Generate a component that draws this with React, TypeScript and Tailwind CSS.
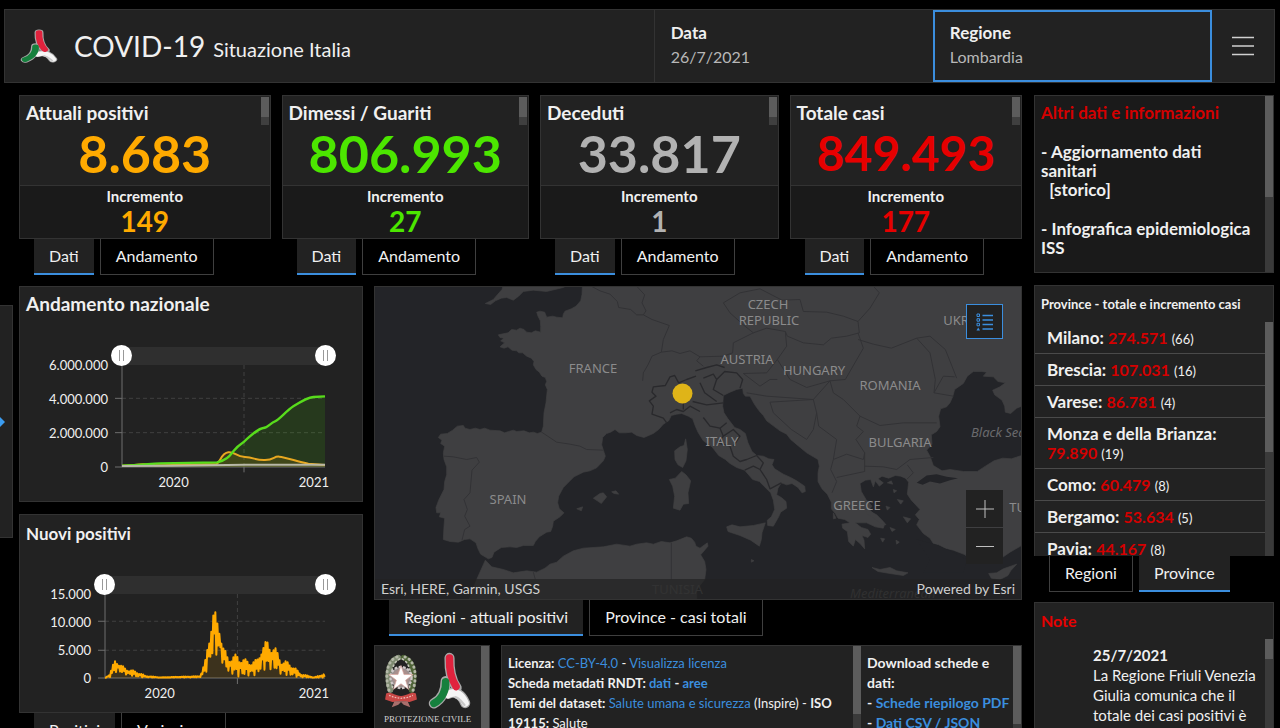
import React, { ReactNode } from "react";

interface StatProps {
    title: string;
    value: string;
    increment: string;
    color: string;
    size: string;
}

interface TabsProps {
    items: string[];
    active: number;
}

interface Province {
    name: string;
    total: string;
    increment: number;
}

const stats: StatProps[] = [
    { title: "Attuali positivi", value: "8.683", increment: "149", color: "text-[#ffaa00]", size: "text-[52px]" },
    { title: "Dimessi / Guariti", value: "806.993", increment: "27", color: "text-[#4ce600]", size: "text-[52px]" },
    { title: "Deceduti", value: "33.817", increment: "1", color: "text-[#b2b2b2]", size: "text-[52px]" },
    { title: "Totale casi", value: "849.493", increment: "177", color: "text-[#e60000]", size: "text-[48px]" },
];

const provinces: Province[] = [
    { name: "Milano", total: "274.571", increment: 66 },
    { name: "Brescia", total: "107.031", increment: 16 },
    { name: "Varese", total: "86.781", increment: 4 },
    { name: "Monza e della Brianza", total: "79.890", increment: 19 },
    { name: "Como", total: "60.479", increment: 8 },
    { name: "Bergamo", total: "53.634", increment: 5 },
    { name: "Pavia", total: "44.167", increment: 8 },
];

const Tabs: React.FC<TabsProps> = ({ items, active }) => (
    <div className="flex shrink-0 gap-1.5 pl-[15px]">
        {items.map((item, i) => (
            <button
                key={item}
                className={`h-9 whitespace-nowrap px-[15px] text-base ${
                    i === active
                        ? "border-b-2 border-[#3b8ede] bg-[#222222]"
                        : "border border-t-0 border-[#3f3f3f] bg-black pb-px"
                }`}
            >
                {item}
            </button>
        ))}
    </div>
);

const StatCard: React.FC<StatProps> = ({ title, value, increment, color, size }) => (
    <section className="min-w-0">
        <div className="relative border border-[#333333] bg-[#222222]">
            <div className="h-[89px] px-1.5 pt-[5px]">
                <h2 className="text-[19px] leading-6 font-bold">{title}</h2>
                <p className={`text-center leading-[56px] font-bold ${size} ${color}`}>{value}</p>
            </div>
            <div className="border-t border-[#333333] bg-[#1a1a1a] text-center">
                <h3 className="text-[15px] leading-5 font-bold">Incremento</h3>
                <p className={`pb-px text-[28px] leading-[31px] font-bold ${color}`}>{increment}</p>
            </div>
            <div className="absolute top-px right-px h-7 w-2 bg-[#3f3f3f]">
                <div className="h-5 bg-[#5c5c5c]" />
            </div>
        </div>
        <Tabs items={["Dati", "Andamento"]} active={0} />
    </section>
);

const thumb =
    "pointer-events-none absolute -top-0.5 -left-[11px] h-[21px] w-[calc(100%+22px)] appearance-none bg-transparent [&::-webkit-slider-thumb]:pointer-events-auto [&::-webkit-slider-thumb]:h-[21px] [&::-webkit-slider-thumb]:w-[21px] [&::-webkit-slider-thumb]:appearance-none [&::-webkit-slider-thumb]:rounded-full [&::-webkit-slider-thumb]:bg-white [&::-webkit-slider-thumb]:bg-[linear-gradient(90deg,transparent_8px,#999999_8px,#999999_9px,transparent_9px,transparent_12px,#999999_12px,#999999_13px,transparent_13px)] [&::-webkit-slider-thumb]:bg-[length:21px_11px] [&::-webkit-slider-thumb]:bg-center [&::-webkit-slider-thumb]:bg-no-repeat";

const RangeSelector: React.FC<{ label: string }> = ({ label }) => (
    <div className="relative h-[18px] bg-[#2f2f2f]">
        <input type="range" min={0} max={100} defaultValue={0} aria-label={`${label}: inizio`} className={thumb} />
        <input type="range" min={0} max={100} defaultValue={100} aria-label={`${label}: fine`} className={thumb} />
    </div>
);

interface ChartProps {
    label: string;
    ticks: string[];
    rowClass: string;
    axisClass: string;
    children: ReactNode;
}

const Chart: React.FC<ChartProps> = ({ label, ticks, rowClass, axisClass, children }) => (
    <div className="flex pr-[37px]">
        <ul className={`shrink-0 text-right text-[13px] ${axisClass}`}>
            {ticks.map((t) => (
                <li key={t} className={rowClass}>
                    {t}
                </li>
            ))}
        </ul>
        <div className="min-w-0 flex-1">
            <RangeSelector label={label} />
            {children}
            <div className="relative h-8 text-[13px]">
                <span className="absolute top-1.5 left-[18%]">2020</span>
                <span className="absolute top-1.5 -right-1">2021</span>
            </div>
        </div>
    </div>
);

const TrendChart = () => (
    <svg viewBox="0 0 609 306" preserveAspectRatio="none" className="block h-[102px] w-full overflow-visible" fill="none">
        <g stroke="#404040" strokeWidth="3" strokeDasharray="12 9">
            <path d="M0 100H609M0 203H609M366 0V306" />
        </g>
        <path d="M0 0V306M-21 306H609M-21 203H0M-21 100H0M366 306V322" stroke="#6e6e6e" strokeWidth="3" />
        <path
            d="M0 302C60 302 80 296 115 295L285 292C315 286 325 270 334 259S352 240 364 232C390 208 410 190 424 189S446 173 459 169S492 138 514 124S560 97 574 96L609 94V306H0Z"
            fill="#4ce600"
            fillOpacity=".12"
        />
        <path
            d="M0 302C30 302 40 298 64 298S90 302 120 301L284 297C296 290 298 264 319 262S340 274 369 276S400 286 429 285S455 273 472 275S520 287 559 296L609 300V306H0Z"
            fill="#ffaa00"
            fillOpacity=".12"
        />
        <path
            d="M0 302C30 302 40 298 64 298S90 302 120 301L284 297C296 290 298 264 319 262S340 274 369 276S400 286 429 285S455 273 472 275S520 287 559 296L609 300"
            stroke="#e8a820"
            strokeWidth="6"
        />
        <path
            d="M0 302C60 302 80 296 115 295L285 292C315 286 325 270 334 259S352 240 364 232C390 208 410 190 424 189S446 173 459 169S492 138 514 124S560 97 574 96L609 94"
            stroke="#58dc1c"
            strokeWidth="7"
        />
        <path d="M0 303L150 302L370 299L609 299" stroke="#b8b8a8" strokeWidth="6" />
    </svg>
);

// [x, peak, trough] of the weekly swing in the daily count
const envelope = [
    [0, 250, 252],
    [14, 240, 250],
    [32, 190, 235],
    [44, 210, 235],
    [64, 224, 242],
    [99, 233, 250],
    [120, 245, 250],
    [164, 250, 251],
    [284, 246, 250],
    [299, 205, 240],
    [314, 95, 215],
    [326, 48, 170],
    [334, 60, 190],
    [342, 90, 175],
    [352, 155, 210],
    [369, 188, 235],
    [396, 180, 248],
    [424, 198, 246],
    [454, 198, 244],
    [469, 152, 230],
    [487, 138, 226],
    [509, 160, 230],
    [529, 198, 242],
    [554, 205, 246],
    [584, 238, 250],
    [624, 250, 251],
    [644, 244, 251],
    [658, 234, 252],
];

const dailyPoints = () => {
    const points: string[] = [];
    for (let x = 0; x <= 658; x += 3) {
        const i = Math.max(1, envelope.findIndex((e) => e[0] >= x));
        const [x0, h0, l0] = envelope[i - 1];
        const [x1, h1, l1] = envelope[i];
        const t = (x - x0) / (x1 - x0);
        const high = h0 + (h1 - h0) * t;
        const low = l0 + (l1 - l0) * t;
        const k = (x / 3) % 2 === 0 ? 0.18 * (1 + Math.sin(x * 2.3)) : 0.78 + 0.22 * Math.cos(x * 1.7);
        points.push(`${x},${(high + (low - high) * k).toFixed(1)}`);
    }
    return points.join(" ");
};

const DailyChart = () => {
    const points = dailyPoints();
    return (
        <svg viewBox="0 0 658 252" preserveAspectRatio="none" className="block h-[84px] w-full overflow-visible" fill="none">
            <path d="M0 82H658M0 169H658M396 0V252" stroke="#404040" strokeWidth="3" strokeDasharray="12 9" />
            <path d="M0 0V252M-21 252H658M-21 169H0M-21 82H0M396 252V270" stroke="#6e6e6e" strokeWidth="3" />
            <polygon points={`0,252 ${points} 658,252`} fill="#ffaa00" fillOpacity=".12" />
            <polyline points={points} stroke="#ffaa00" strokeWidth="6" strokeLinejoin="round" />
        </svg>
    );
};

// Three-armed mark of the civil protection department
const ProtezioneMark: React.FC<{ className: string }> = ({ className }) => (
    <svg viewBox="0 0 132 172" preserveAspectRatio="none" className={className} fill="none" strokeLinecap="round">
        <g stroke="#a9a9a9" strokeWidth="31">
            <path d="M66 18C65 52 70 84 88 108" />
            <path d="M54 88C54 114 44 142 18 155" />
            <path d="M62 126C86 116 104 130 114 154" />
        </g>
        <path d="M44 128L80 112L96 128L60 142Z" fill="#a9a9a9" />
        <path d="M62 128C86 116 104 130 114 154" stroke="#f5f5f5" strokeWidth="23" />
        <path d="M84 136C98 140 104 152 112 160" stroke="#c9c9c9" strokeWidth="7" />
        <path d="M66 18C65 52 70 80 86 104" stroke="#e0223d" strokeWidth="23" />
        <path d="M54 90C56 114 44 142 18 155" stroke="#15803d" strokeWidth="23" />
    </svg>
);

const RepublicEmblem = () => (
    <svg viewBox="0 0 100 166" className="h-[55px] w-[34px]">
        <g fill="none" strokeLinecap="round">
            <path d="M42 14C14 22 4 66 18 112" stroke="#7f8b72" strokeWidth="17" />
            <path d="M58 14C86 22 96 66 82 112" stroke="#4e6337" strokeWidth="17" />
            <path d="M38 12C8 22 0 66 14 114M62 12C92 22 100 66 86 114" stroke="#b4b8a8" strokeWidth="9" strokeDasharray="1 13" />
            <path d="M46 18C22 30 14 70 26 110M54 18C78 30 86 70 74 110" stroke="#c3c5b8" strokeWidth="5" strokeDasharray="4 9" />
        </g>
        <circle cx="50" cy="74" r="32" fill="#9a9090" stroke="#cfc9c9" strokeWidth="7" strokeDasharray="8 5" />
        <circle cx="50" cy="74" r="25" fill="#a98f8c" />
        <path d="M50 38L59 65L87 65L64 82L73 110L50 93L27 110L36 82L13 65L41 65Z" fill="#fff" stroke="#d8a39b" strokeWidth="2" />
        <path d="M5 122C18 116 30 128 50 130C70 128 82 116 95 122L98 140L76 148L50 146L24 148L2 140Z" fill="#c94846" />
        <path d="M14 128L30 134L50 137L70 134L86 128" stroke="#efb9b4" strokeWidth="4" strokeDasharray="5 4" fill="none" />
        <path d="M30 146L22 164L42 156L50 148L58 156L78 164L70 146Z" fill="#a96f6c" />
    </svg>
);

const mapLabels: [number, number, string][] = [
    [593, 373, "FRANCE"],
    [508, 504, "SPAIN"],
    [768, 309, "CZECH"],
    [769, 325, "REPUBLIC"],
    [747, 364, "AUSTRIA"],
    [814, 375, "HUNGARY"],
    [890, 390, "ROMANIA"],
    [722, 446, "ITALY"],
    [900, 447, "BULGARIA"],
    [857, 510, "GREECE"],
    [971, 325, "UKRAINE"],
    [1033, 512, "TURKEY"],
];

const BaseMap = () => (
    <svg
        viewBox="375 287 646 313"
        preserveAspectRatio="xMidYMid slice"
        className="block h-full w-full"
        role="img"
        aria-label="Mappa attuali positivi"
    >
        <rect x="0" y="0" width="1400" height="900" fill="#232428" />
        <g transform="translate(370 280) scale(.33333)">
            <g fill="#3f3f41" stroke="#3f3f41" strokeWidth="2" strokeLinejoin="round">
                <path d="M638 0L636 45L632 64L618 80L604 88L585 95L580 104L578 115L560 113L548 110L530 113L524 98L510 95L500 98L504 110L511 124L512 140L512 158L496 154L484 160L470 158L462 150L450 146L440 152L425 150L414 160L385 166L390 174L402 176L392 184L404 190L390 202L402 206L414 202L426 212L440 214L446 220L458 220L470 230L484 236L492 246L490 256L498 270L508 278L516 290L526 294L530 306L526 316L532 330L528 370L522 400L520 440L515 458L502 462L490 458L478 460L462 454L440 456L430 452L416 456L404 460L390 454L360 452L344 446L330 450L316 446L300 450L285 446L280 438L262 440L248 452L232 462L212 464L205 474L216 482L212 492L224 500L220 520L222 540L230 562L230 586L224 606L222 630L206 662L198 684L200 700L212 700L208 712L224 716L222 740L220 780L240 786L265 788L284 780L300 778L318 790L324 808L332 824L355 838L366 834L372 818L394 804L420 802L440 804L460 798L490 798L496 786L508 772L530 758L542 756L548 740L550 725L570 712L582 700L568 688L563 670L566 650L580 624L600 604L612 592L640 578L660 574L680 565L700 544L706 530L700 512L695 496L698 474L710 462L722 458L735 450L748 460L765 460L785 458L800 468L822 474L850 462L866 450L880 434L896 424L904 408L920 404L935 402L955 410L968 418L976 440L984 458L1000 484L1026 502L1046 528L1066 540L1080 552L1100 564L1124 572L1148 600L1168 606L1182 620L1202 640L1210 662L1214 690L1204 712L1192 722L1193 738L1210 740L1226 712L1232 698L1250 686L1248 666L1234 654L1220 646L1224 626L1234 610L1250 616L1266 612L1284 624L1296 640L1306 636L1304 620L1280 604L1262 594L1240 584L1214 568L1206 556L1212 540L1196 538L1180 530L1160 528L1146 516L1134 490L1126 462L1110 450L1094 444L1074 418L1062 400L1058 380L1060 348L1080 338L1100 330L1118 326L1120 342L1126 350L1140 350L1152 372L1160 384L1172 400L1180 408L1190 424L1206 436L1230 454L1250 464L1262 480L1286 500L1310 520L1344 540L1348 560L1344 580L1344 606L1356 628L1372 644L1384 668L1384 688L1396 702L1404 716L1424 720L1440 730L1416 734L1418 746L1432 756L1436 786L1450 800L1456 780L1470 792L1484 808L1482 782L1476 768L1494 774L1502 764L1494 750L1474 744L1456 730L1490 730L1516 742L1540 746L1544 734L1516 708L1498 690L1506 680L1488 660L1474 636L1470 612L1486 602L1502 600L1510 622L1516 604L1528 620L1540 610L1524 598L1536 590L1556 596L1576 588L1592 590L1606 596L1616 608L1614 626L1612 644L1624 662L1650 690L1636 706L1648 720L1640 736L1660 762L1680 776L1690 792L1706 796L1726 806L1750 812L1786 826L1800 846L1830 842L1870 838L1900 832L1920 818L1955 798L1955 528L1924 538L1898 536L1872 544L1846 560L1822 576L1780 576L1740 570L1716 574L1690 558L1680 530L1670 512L1686 494L1684 466L1700 456L1710 442L1706 410L1712 388L1730 382L1740 370L1748 352L1754 330L1780 312L1792 290L1810 276L1836 276L1850 278L1840 290L1870 292L1884 306L1906 310L1890 322L1868 332L1874 346L1896 362L1904 380L1906 398L1922 402L1940 386L1955 380V0Z" />
                <path d="M404 0L396 30L382 46L370 60L346 72L362 75L376 64L394 56L410 54L430 62L446 50L460 36L490 32L530 36L580 24L620 0Z" />
                <path d="M346 842L365 862L400 870L430 880L470 874L500 878L525 866L540 854L560 848L580 830L610 814L640 806L700 802L740 794L780 800L800 794L830 790L850 794L874 786L900 790L920 784L950 772L964 776L974 788L978 800L990 806L1012 790L1014 800L992 826L1004 846L1008 870L1004 900L980 930V980H290L320 900Z" />
                <path d="M1070 742L1086 736L1110 742L1150 738L1186 730L1176 760L1174 780L1168 800L1142 782L1110 768L1074 756Z" />
                <path d="M898 600L916 596L935 576L948 586L962 604L954 640L956 672L940 674L930 692L910 686L914 650L908 620Z" />
                <path d="M947 478L952 510L948 544L938 564L924 556L915 540L914 514L930 502L942 498Z" />
                <path d="M670 656L690 642L700 640L710 652L694 672L682 664ZM725 637L738 634L746 644L732 642ZM620 688L638 682L634 694Z" />
                <path d="M1506 864L1530 870L1560 864L1580 874L1614 880L1600 888L1560 882L1524 876ZM1856 882L1880 880L1900 868L1940 854L1922 874L1914 888L1890 900L1864 896Z" />
                <path d="M1490 690L1520 706L1540 726L1548 736L1528 730L1506 712L1488 702ZM1582 660l18 4l-8 10zM1600 712l22 6l-10 12zM1570 630l10 4l-8 6zM1548 680l12 4l-8 8zM1560 744l16 6l-10 6zM1578 782l10 6l-8 6zM1532 776l12 2l-6 10zM1552 610l12-6l4 10zM1390 700l8 16l-8 2zM1144 840l8 4l-8 4z" />
            </g>
            <path d="M1640 610L1670 588L1700 584L1730 592L1764 596L1740 602L1710 612L1680 606L1658 616Z" fill="#232428" />
            <path d="M1640 780L1700 796L1740 814L1790 840L1780 880L1660 880L1680 840Z" fill="#232428" />
            <g fill="none" stroke="#323235" strokeWidth="3" strokeLinejoin="round">
                <path d="M515 458L560 488L600 494L630 500L650 510L700 512M222 530L250 532L290 540L320 534L328 548L306 572L300 640L282 660L292 690L284 710L300 740L284 750L276 782M904 790V900M490 878L496 900" />
                <path d="M660 18L690 34L720 44L742 66L746 84L782 90L800 106L820 106L846 120L898 138L880 180L874 218M800 20L824 46L816 70L828 94L820 106M874 218L846 230L834 256L820 280L818 304M874 218L906 214L930 222L960 214L990 232L980 244L1000 260" />
                <path d="M1060 70L1110 40L1170 28L1236 62L1290 60L1300 96L1370 98L1420 110L1464 126L1500 86L1528 40L1510 20M1060 70L1080 100L1120 136L1150 160L1190 146L1246 156L1252 170L1300 190L1360 196L1384 176L1430 170L1468 160L1464 126M1150 160L1090 190L1088 220L1060 230L990 232M1246 156L1250 200L1222 240L1190 280L1120 282M1222 240L1260 300L1310 324L1380 304L1426 300L1480 206L1464 160M1464 180L1510 194L1564 206L1640 176L1680 170L1726 210L1746 260L1760 296M1640 176L1680 220L1696 300L1692 340L1720 290L1754 292M1692 340L1750 350" />
                <path d="M1120 282L1170 320L1200 300L1222 300M1130 340L1190 350L1330 360L1380 304M1200 368L1330 360L1340 400L1330 450L1310 480L1264 450L1210 400ZM1380 304L1390 340L1420 360L1470 410L1460 440L1480 456L1458 480L1484 520L1480 540L1430 524L1390 540L1382 570L1400 606L1386 640M1340 400L1346 440L1400 480L1390 540M1470 410L1530 438L1600 430L1700 430M1484 560L1540 562L1580 570L1620 540L1690 534M1400 594L1484 576V520M1610 600L1630 580L1612 556" />
            </g>
            <g fill="none" stroke="#29292c" strokeWidth="4" strokeLinejoin="round">
                <path d="M978 290L950 300L926 310L914 288L900 292L886 318L850 322L846 338L858 350L838 364L850 380L846 404L880 416L890 430M900 400L920 390L940 396L960 380L990 396M940 372V390M968 366L1010 376L1060 370M976 274L1010 264L1040 256L1064 264M1000 296L1030 284L1040 300L1064 276L1100 280L1118 300L1110 326M990 310L1004 340L1040 366M1040 300L1030 330L1060 348" />
                <path d="M1000 414L1020 440L1050 446L1060 470L1044 490L1080 500L1090 530L1110 546L1130 540L1160 528M1050 446L1070 430M1060 470L1090 450L1110 470L1090 500M1124 572L1150 560L1170 570L1190 600L1200 628L1234 610M1160 528L1180 550L1170 570" />
            </g>
        </g>
        <g fill="#8b8b8c" fontFamily="'Noto Sans', sans-serif" fontSize="13" textAnchor="middle">
            {mapLabels.map(([x, y, name]) => (
                <text key={name} x={x} y={y}>
                    {name}
                </text>
            ))}
        </g>
        <g fontFamily="'Noto Sans', sans-serif" fontSize="13">
            <text x="971" y="437" fill="#6a6a6d" fontStyle="italic">
                Black Sea
            </text>
            <text x="652" y="594" fill="#58585a">
                TUNISIA
            </text>
            <text x="850" y="598" fill="#505053" fontStyle="italic">
                Mediterranean
            </text>
        </g>
        <circle cx="682.500" cy="394" r="10" fill="#dfb418" />
    </svg>
);

const LegendIcon = () => (
    <svg viewBox="0 0 18 18" className="h-[18px] w-[18px]" fill="none" stroke="#3b8ede">
        <path d="M6.500 2.500H17M6.500 7H17M6.500 11.500H17M6.500 16H17" strokeWidth="1.500" />
        <path d="M1 1h2.500v2.500H1zM1 5.700h2.500v2.500H1zM1 10.300h2.500v2.500H1z" />
        <path d="M.5 17.500L2.200 14.500L4 17.500Z" fill="#3b8ede" stroke="none" />
    </svg>
);

const Scrollbar: React.FC<{ thumbClass: string }> = ({ thumbClass }) => (
    <div className="w-2 shrink-0 bg-[#3a3a3a]">
        <div className={`bg-[#5c5c5c] ${thumbClass}`} />
    </div>
);

const link = "text-[#3b8ede] hover:underline";

const App = () => {
    return (
        <div className="flex h-screen flex-col overflow-hidden bg-black font-['Lato',sans-serif] text-[#f0f0f0]">
            <header className="mr-[5px] ml-1 mt-[9px] flex h-[74px] shrink-0 border border-[#333333] bg-[#222222]">
                <div className="flex min-w-0 flex-1 items-center pl-[15px]">
                    <ProtezioneMark className="h-[34px] w-[38px] shrink-0" />
                    <h1 className="ml-4 flex items-baseline gap-2 whitespace-nowrap text-[28px] leading-9">
                        COVID-19 <span className="text-xl">Situazione Italia</span>
                    </h1>
                </div>
                <button className="w-[22%] border-l border-[#333333] px-4 pb-0.5 text-left">
                    <span className="block text-[17px] leading-6 font-bold">Data</span>
                    <span className="block text-base leading-6 text-[#b8b8b8]">26/7/2021</span>
                </button>
                <button className="w-[22%] border-2 border-[#3b8ede] px-[15px] pb-0.5 text-left">
                    <span className="block text-[17px] leading-6 font-bold">Regione</span>
                    <span className="block text-base leading-6 text-[#b8b8b8]">Lombardia</span>
                </button>
                <button className="flex w-[62px] items-center justify-center" aria-label="Menu">
                    <svg viewBox="0 0 22 20" className="h-5 w-[22px]" stroke="#d0d0d0" strokeWidth="1.500">
                        <path d="M0 1.500H22M0 10H22M0 18.500H22" />
                    </svg>
                </button>
            </header>

            <main className="mt-3 flex min-h-0 flex-1 pr-1.5">
                <aside className="mt-[210px] mr-1.5 flex h-[233px] w-[13px] shrink-0 items-center overflow-hidden border border-l-0 border-[#333333] bg-[#222222]">
                    <button aria-label="Apri pannello">
                        <svg viewBox="0 0 5 10" className="h-2.5 w-[5px]">
                            <path d="M0 0L5 5L0 10Z" fill="#3b9cf0" />
                        </svg>
                    </button>
                </aside>

                <div className="grid min-h-0 flex-1 grid-cols-[1003fr_240fr] gap-3">
                    <div className="flex min-h-0 min-w-0 flex-col gap-[11px]">
                        <div className="grid grid-cols-[251fr_247fr_238fr_232fr] gap-[11px]">
                            {stats.map((s) => (
                                <StatCard key={s.title} {...s} />
                            ))}
                        </div>

                        <div className="grid min-h-0 flex-1 grid-cols-[344fr_648fr] gap-[11px]">
                            <div className="min-h-0 min-w-0">
                                <section className="h-[216px] border border-[#333333] bg-[#222222]">
                                    <h2 className="px-1.5 pt-[5px] pb-[31px] text-[19px] leading-6 font-bold">Andamento nazionale</h2>
                                    <Chart
                                        label="Andamento nazionale"
                                        ticks={["6.000.000", "4.000.000", "2.000.000", "0"]}
                                        rowClass="h-[34px] leading-[36px]"
                                        axisClass="w-[102px] pr-3.5"
                                    >
                                        <TrendChart />
                                    </Chart>
                                </section>
                                <section className="mt-3 h-[199px] border border-[#333333] bg-[#222222]">
                                    <h2 className="px-1.5 pt-[7px] pb-[30px] text-[17px] leading-6 font-bold">Nuovi positivi</h2>
                                    <Chart
                                        label="Nuovi positivi"
                                        ticks={["15.000", "10.000", "5.000", "0"]}
                                        rowClass="h-7 leading-[36px]"
                                        axisClass="w-[85px] pr-3.5"
                                    >
                                        <DailyChart />
                                    </Chart>
                                </section>
                                <Tabs items={["Positivi", "Variazione"]} active={0} />
                            </div>

                            <div className="flex min-h-0 min-w-0 flex-col">
                                <div className="relative h-[314px] shrink-0 border border-[#333333]">
                                    <BaseMap />
                                    <button
                                        aria-label="Legenda"
                                        className="absolute top-[17px] right-[18px] flex h-[35px] w-[37px] items-center justify-center border border-[#3b8ede] bg-[#222222]"
                                    >
                                        <LegendIcon />
                                    </button>
                                    <div className="absolute right-[18px] bottom-[35px] flex w-[37px] flex-col gap-px">
                                        <button aria-label="Zoom avanti" className="flex h-[37px] items-center justify-center bg-[#222222]">
                                            <svg viewBox="0 0 18 18" className="h-[18px] w-[18px]" stroke="#c0c0c0">
                                                <path d="M0 9H18M9 0V18" />
                                            </svg>
                                        </button>
                                        <button aria-label="Zoom indietro" className="flex h-9 items-center justify-center bg-[#222222]">
                                            <svg viewBox="0 0 18 18" className="h-[18px] w-[18px]" stroke="#c0c0c0">
                                                <path d="M0 9.500H18" />
                                            </svg>
                                        </button>
                                    </div>
                                    <div className="absolute inset-x-0 bottom-0 flex h-5 items-center justify-between bg-[#222222]/70 px-1.5 text-sm text-[#d0d0d0]">
                                        <span>Esri, HERE, Garmin, USGS</span>
                                        <span>Powered by Esri</span>
                                    </div>
                                </div>
                                <Tabs items={["Regioni - attuali positivi", "Province - casi totali"]} active={0} />

                                <div className="mt-[9px] grid min-h-0 flex-1 grid-cols-[116fr_371fr_161fr] text-sm leading-5">
                                    <section className="flex min-h-0 overflow-hidden border border-b-0 border-[#333333] bg-[#222222]">
                                        <div className="min-w-0 flex-1 px-[7px] pt-1.5">
                                            <div className="flex items-center gap-2.5 pl-0.5">
                                                <RepublicEmblem />
                                                <ProtezioneMark className="h-[57px] w-[43px]" />
                                            </div>
                                            <p className="whitespace-nowrap pl-0.5 font-['Liberation_Serif',serif] text-[9px] leading-5 text-[#d0d0d0]">
                                                PROTEZIONE CIVILE
                                            </p>
                                        </div>
                                        <Scrollbar thumbClass="h-full" />
                                    </section>
                                    <section className="ml-[11px] flex min-h-0 overflow-hidden border border-r-0 border-b-0 border-[#333333] bg-[#222222]">
                                        <div className="min-w-0 flex-1 pt-[7px] pl-1.5 text-[13px]">
                                            <p>
                                                <b>Licenza:</b>{" "}
                                                <a href="#licenza" className={link}>
                                                    CC-BY-4.0
                                                </a>{" "}
                                                -{" "}
                                                <a href="#visualizza" className={link}>
                                                    Visualizza licenza
                                                </a>
                                            </p>
                                            <p>
                                                <b>
                                                    Scheda metadati RNDT:{" "}
                                                    <a href="#dati" className={link}>
                                                        dati
                                                    </a>{" "}
                                                    -{" "}
                                                    <a href="#aree" className={link}>
                                                        aree
                                                    </a>
                                                </b>
                                            </p>
                                            <p>
                                                <b>Temi del dataset:</b>{" "}
                                                <a href="#salute" className={link}>
                                                    Salute umana e sicurezza
                                                </a>{" "}
                                                (Inspire) - <b>ISO 19115:</b> Salute
                                            </p>
                                        </div>
                                        <Scrollbar thumbClass="h-[68px]" />
                                    </section>
                                    <section className="flex min-h-0 overflow-hidden border border-b-0 border-l-0 border-[#333333] bg-[#222222]">
                                        <div className="min-w-0 flex-1 pt-[7px] pl-1.5 font-bold">
                                            <p>Download schede e dati:</p>
                                            <p className="whitespace-nowrap">
                                                -{" "}
                                                <a href="#pdf" className={link}>
                                                    Schede riepilogo PDF
                                                </a>
                                            </p>
                                            <p>
                                                -{" "}
                                                <a href="#csv" className={link}>
                                                    Dati CSV / JSON
                                                </a>
                                            </p>
                                        </div>
                                        <Scrollbar thumbClass="h-[78px]" />
                                    </section>
                                </div>
                            </div>
                        </div>
                    </div>

                    <div className="flex min-h-0 min-w-0 flex-col">
                        <section className="flex h-[178px] shrink-0 border border-[#333333] bg-[#1a1a1a]">
                            <div className="min-w-0 flex-1 space-y-5 pt-[7px] pr-2 pl-1.5 text-[17px] leading-[19px] font-bold">
                                <h2 className="text-[#d40000]">Altri dati e informazioni</h2>
                                <p>
                                    - Aggiornamento dati sanitari
                                    <br />
                                    &nbsp; [storico]
                                </p>
                                <p>- Infografica epidemiologica ISS</p>
                            </div>
                            <Scrollbar thumbClass="h-[101px]" />
                        </section>

                        <section className="mt-3 flex h-[271px] shrink-0 flex-col border border-b-0 border-[#333333] bg-[#222222]">
                            <h2 className="px-1.5 py-2 text-[13px] leading-5 font-bold">Province - totale e incremento casi</h2>
                            <div className="flex min-h-0 flex-1">
                                <ul className="min-w-0 flex-1 overflow-hidden">
                                    {provinces.map((p) => (
                                        <li key={p.name} className="border-b border-[#4a4a4a] px-3 py-1.5 text-[17px] leading-[19px] font-bold">
                                            {p.name}: <span className="text-base leading-none text-[#d40000]">{p.total}</span>{" "}
                                            <span className="text-[13px] leading-none font-normal">({p.increment})</span>
                                        </li>
                                    ))}
                                </ul>
                                <Scrollbar thumbClass="h-[130px]" />
                            </div>
                        </section>
                        <Tabs items={["Regioni", "Province"]} active={1} />

                        <section className="mt-2.5 flex min-h-0 flex-1 flex-col border border-b-0 border-[#333333] bg-[#222222]">
                            <h2 className="px-1.5 pt-2 pb-2 text-base leading-5 font-bold text-[#e60000]">Note</h2>
                            <div className="flex min-h-0 flex-1">
                                <div className="min-w-0 flex-1 overflow-hidden pt-1.5 pr-1 pl-[58px] text-[15px] leading-5">
                                    <b>25/7/2021</b>
                                    <p>La Regione Friuli Venezia Giulia comunica che il totale dei casi positivi è stato ridotto</p>
                                </div>
                                <Scrollbar thumbClass="h-5" />
                            </div>
                        </section>
                    </div>
                </div>
            </main>
        </div>
    );
};

export default App;
